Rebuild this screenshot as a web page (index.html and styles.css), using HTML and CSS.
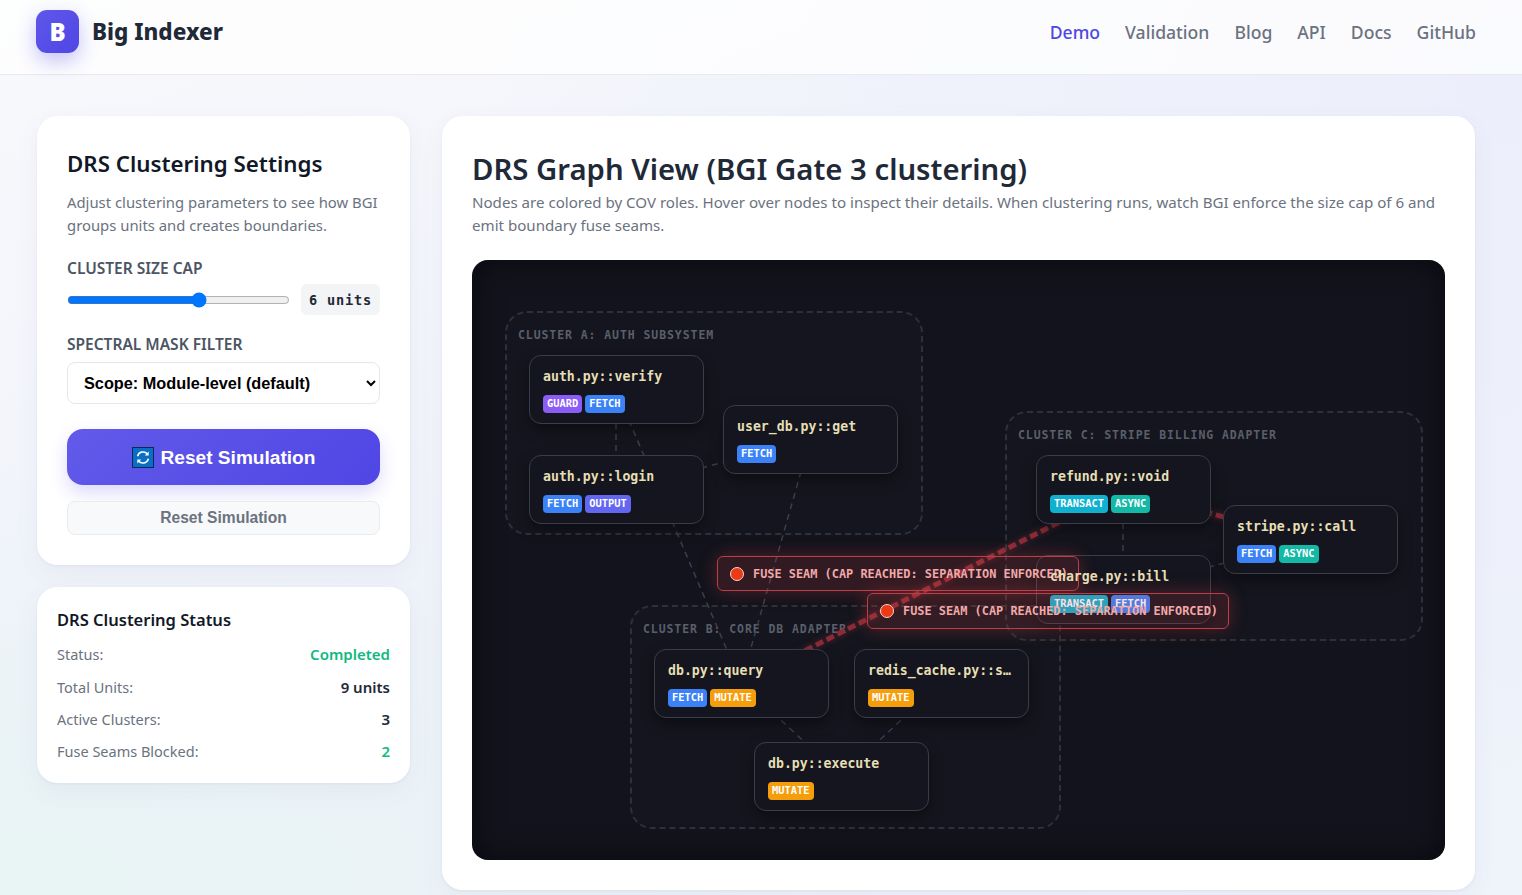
FILE: index.html
```html
<!DOCTYPE html>
<html lang="en">
<head>
<meta charset="utf-8">
<title>Big Indexer - DRS Demo</title>
<link rel="stylesheet" href="styles.css">
</head>
<body>
<header class="topbar">
  <div class="brand">
    <div class="brand_logo">B</div>
    <span class="brand_name">Big Indexer</span>
  </div>
  <nav class="nav">
    <a class="nav_active" href="#">Demo</a>
    <a href="#">Validation</a>
    <a href="#">Blog</a>
    <a href="#">API</a>
    <a href="#">Docs</a>
    <a href="#">GitHub</a>
  </nav>
</header>

<main class="layout">
  <aside class="sidebar">
    <section class="card settings">
      <h2>DRS Clustering Settings</h2>
      <p class="muted">Adjust clustering parameters to see how BGI groups units and creates boundaries.</p>
      <label class="field_label">CLUSTER SIZE CAP</label>
      <div class="slider_row">
        <input class="slider" type="range" min="3" max="8" value="6">
        <span class="slider_value">6 units</span>
      </div>
      <label class="field_label">SPECTRAL MASK FILTER</label>
      <select class="select">
        <option>Scope: Module-level (default)</option>
      </select>
      <button class="btn_primary" type="button">
        <svg class="btn_icon" viewBox="0 0 22 21">
          <rect x="0.5" y="0.5" width="21" height="20" fill="#0a6fc4" stroke="#0b2a52"/>
          <path d="M5.6 9.2A5.6 5.6 0 0 1 15.4 7" fill="none" stroke="#fff" stroke-width="1.5"/>
          <path d="M16.7 4.6v3.9h-3.9z" fill="#fff"/>
          <path d="M16.4 11.8A5.6 5.6 0 0 1 6.6 14" fill="none" stroke="#fff" stroke-width="1.5"/>
          <path d="M5.3 16.4v-3.9h3.9z" fill="#fff"/>
        </svg>
        Reset Simulation
      </button>
      <button class="btn_secondary" type="button">Reset Simulation</button>
    </section>

    <section class="card status">
      <h3>DRS Clustering Status</h3>
      <div class="status_row"><span>Status:</span><b class="good">Completed</b></div>
      <div class="status_row"><span>Total Units:</span><b>9 units</b></div>
      <div class="status_row"><span>Active Clusters:</span><b>3</b></div>
      <div class="status_row"><span>Fuse Seams Blocked:</span><b class="good">2</b></div>
    </section>
  </aside>

  <section class="card graph_card">
    <h1>DRS Graph View (BGI Gate 3 clustering)</h1>
    <p class="muted">Nodes are colored by COV roles. Hover over nodes to inspect their details. When clustering runs, watch BGI enforce the size cap of 6 and emit boundary fuse seams.</p>

    <div class="graph">
      <div class="cluster cluster_a"><span>CLUSTER A: AUTH SUBSYSTEM</span></div>
      <div class="cluster cluster_b"><span>CLUSTER B: CORE DB ADAPTER</span></div>
      <div class="cluster cluster_c"><span>CLUSTER C: STRIPE BILLING ADAPTER</span></div>

      <svg class="edges" width="973" height="600" viewBox="0 0 973 600">
        <line x1="144" y1="130" x2="144" y2="230"/>
        <line x1="144" y1="130" x2="269" y2="423"/>
        <line x1="144" y1="230" x2="338" y2="180"/>
        <line x1="338" y1="180" x2="269" y2="423"/>
        <line x1="269" y1="423" x2="369" y2="516"/>
        <line x1="469" y1="423" x2="369" y2="516"/>
        <line x1="651" y1="230" x2="651" y2="330"/>
        <line x1="651" y1="330" x2="838" y2="280"/>
        <line class="edge_cut" x1="651" y1="230" x2="838" y2="280"/>
        <line class="edge_cut" x1="651" y1="230" x2="269" y2="423"/>
      </svg>

      <div class="node node_verify">
        <div class="node_name">auth.py::verify</div>
        <div class="tags"><span class="tag guard">GUARD</span><span class="tag fetch">FETCH</span></div>
      </div>
      <div class="node node_login">
        <div class="node_name">auth.py::login</div>
        <div class="tags"><span class="tag fetch">FETCH</span><span class="tag output">OUTPUT</span></div>
      </div>
      <div class="node node_userdb">
        <div class="node_name">user_db.py::get</div>
        <div class="tags"><span class="tag fetch">FETCH</span></div>
      </div>
      <div class="node node_query">
        <div class="node_name">db.py::query</div>
        <div class="tags"><span class="tag fetch">FETCH</span><span class="tag mutate">MUTATE</span></div>
      </div>
      <div class="node node_redis">
        <div class="node_name">redis_cache.py::set</div>
        <div class="tags"><span class="tag mutate">MUTATE</span></div>
      </div>
      <div class="node node_execute">
        <div class="node_name">db.py::execute</div>
        <div class="tags"><span class="tag mutate">MUTATE</span></div>
      </div>
      <div class="node node_refund">
        <div class="node_name">refund.py::void</div>
        <div class="tags"><span class="tag transact">TRANSACT</span><span class="tag async">ASYNC</span></div>
      </div>
      <div class="node node_charge">
        <div class="node_name">charge.py::bill</div>
        <div class="tags"><span class="tag transact">TRANSACT</span><span class="tag fetch">FETCH</span></div>
      </div>
      <div class="node node_stripe">
        <div class="node_name">stripe.py::call</div>
        <div class="tags"><span class="tag fetch">FETCH</span><span class="tag async">ASYNC</span></div>
      </div>

      <div class="fuse fuse_one"><i></i>FUSE SEAM (CAP REACHED: SEPARATION ENFORCED)</div>
      <div class="fuse fuse_two"><i></i>FUSE SEAM (CAP REACHED: SEPARATION ENFORCED)</div>
    </div>
  </section>
</main>
</body>
</html>
```

FILE: styles.css
```css
* {
	box-sizing: border-box;
}
html, body {
	height: 100%;
}
body {
	margin: 0;
	overflow: hidden;
	font-family: "Noto Sans", "Open Sans", sans-serif;
	color: #1f2937;
	background:
		radial-gradient(ellipse 60% 50% at 0% 100%, #e8f4f4 0%, rgba(232, 244, 244, 0) 100%),
		radial-gradient(ellipse 70% 80% at 100% 10%, #eceefb 0%, rgba(236, 238, 251, 0) 100%),
		linear-gradient(160deg, #f8f9fc 0%, #eef1fa 60%, #eff3fa 100%);
}

/* top bar */
.topbar {
	height: 75px;
	display: flex;
	align-items: center;
	justify-content: space-between;
	padding: 0 46px 0 36px;
	background: rgba(255, 255, 255, 0.75);
	border-bottom: 1px solid #e8eaf0;
}
.brand {
	display: flex;
	align-items: center;
	gap: 13px;
	margin-top: -11px;
}
.brand_logo {
	width: 43px;
	height: 43px;
	border-radius: 11px;
	display: flex;
	align-items: center;
	justify-content: center;
	background: linear-gradient(135deg, #5f57ea, #4f46e5);
	box-shadow: 0 8px 20px rgba(79, 70, 229, 0.32);
	color: #fff;
	font-size: 24px;
	font-weight: 900;
}
.brand_name {
	font-size: 22.5px;
	font-weight: 800;
	color: #1f2937;
}
.nav {
	display: flex;
	gap: 25px;
	margin-top: -11px;
}
.nav a {
	font-size: 17.6px;
	font-weight: 500;
	color: #6b7280;
	text-decoration: none;
}
.nav a.nav_active {
	color: #4f46e5;
}

/* page columns */
.layout {
	display: grid;
	grid-template-columns: 373px 1033px;
	gap: 32px;
	padding: 41px 0 0 37px;
}
.sidebar {
	display: flex;
	flex-direction: column;
	gap: 22px;
}
.card {
	background: #fff;
	border-radius: 20px;
	border: 1px solid #fff;
	box-shadow: 0 1px 3px rgba(100, 110, 160, 0.08), 0 8px 24px rgba(100, 110, 160, 0.06);
}
.muted {
	margin: 0;
	font-size: 15.1px;
	line-height: 23px;
	color: #6b7280;
}

/* settings card */
.settings {
	height: 449px;
	padding: 32px 29px 0 29px;
}
.settings h2 {
	margin: 0 0 12px 0;
	font-size: 22.3px;
	line-height: 30px;
	font-weight: 600;
	color: #111827;
}
.settings .muted {
	font-size: 14.85px;
}
.field_label {
	display: block;
	font-size: 15.5px;
	line-height: 20px;
	font-weight: 600;
	color: #4b5563;
}
.settings .muted + .field_label {
	margin-top: 21px;
}
.slider_row {
	display: flex;
	align-items: center;
	justify-content: space-between;
	margin: 6px 0 19px 0;
}
.slider {
	width: 223px;
	margin: 0;
}
.slider_value {
	width: 79px;
	height: 31px;
	display: flex;
	align-items: center;
	justify-content: center;
	border-radius: 6px;
	background: #f3f4f6;
	font-family: "DejaVu Sans Mono", monospace;
	font-size: 13.6px;
	font-weight: 700;
	letter-spacing: 0.8px;
	color: #1f2937;
}
.select {
	display: block;
	width: 313px;
	height: 42px;
	margin: 8px 0 25px 0;
	padding: 0 12px;
	border: 1px solid #e5e7eb;
	border-radius: 8px;
	background-color: #fff;
	font-family: "Liberation Sans", sans-serif;
	font-size: 16.3px;
	font-weight: 700;
	color: #000;
}
.btn_primary, .btn_secondary {
	display: flex;
	align-items: center;
	justify-content: center;
	width: 313px;
	font-family: "Liberation Sans", sans-serif;
	font-weight: 700;
	cursor: pointer;
}
.btn_primary {
	height: 56px;
	gap: 7px;
	padding-top: 2px;
	border: 0;
	border-radius: 16px;
	background: linear-gradient(135deg, #625ae9, #4f46e5);
	box-shadow: 0 8px 18px rgba(79, 70, 229, 0.2);
	font-size: 19.1px;
	color: #fff;
}
.btn_icon {
	width: 22px;
	height: 21px;
}
.btn_secondary {
	height: 34px;
	margin-top: 16px;
	border: 1px solid #e9ebef;
	border-radius: 8px;
	background: #f8f9fb;
	font-size: 15.6px;
	color: #6b7280;
}

/* status card */
.status {
	height: 196px;
	padding: 18px 19px 0 19px;
}
.status h3 {
	margin: 0 0 4px 0;
	font-size: 16.5px;
	line-height: 28px;
	font-weight: 600;
	color: #111827;
}
.status_row {
	display: flex;
	justify-content: space-between;
	height: 32.4px;
	align-items: center;
	font-size: 14.5px;
	color: #6b7280;
}
.status_row b {
	font-size: 15px;
	font-weight: 600;
	color: #1f2937;
}
.status_row b.good {
	color: #10b981;
}

/* graph card */
.graph_card {
	height: 774px;
	padding: 32px 29px 0 29px;
}
.graph_card h1 {
	margin: 0 0 2px 0;
	font-size: 29.3px;
	line-height: 40px;
	font-weight: 600;
	color: #1f2937;
}
.graph {
	position: relative;
	width: 973px;
	height: 600px;
	margin-top: 23px;
	border-radius: 16px;
	overflow: hidden;
	background: #12131c;
	box-shadow: inset 0 0 30px rgba(0, 0, 0, 0.5);
}
.edges {
	position: absolute;
	left: 0;
	top: 0;
}
.edges line {
	stroke: #3b3f4b;
	stroke-width: 1.5;
	stroke-dasharray: 6 5;
}
.edges line.edge_cut {
	stroke: #8a2c38;
	stroke-width: 5;
	stroke-dasharray: 8 4;
	filter: drop-shadow(0 0 3px rgba(239, 68, 68, 0.35));
}

/* clusters, placed on the diagram canvas */
.cluster {
	position: absolute;
	padding: 15px 11px;
	border: 2px dashed #2e3139;
	border-radius: 22px;
	background: rgba(255, 255, 255, 0.012);
}
.cluster span {
	display: block;
	font-family: "DejaVu Sans Mono", monospace;
	font-size: 11.5px;
	line-height: 14px;
	font-weight: 700;
	letter-spacing: 0.92px;
	color: #5a5f6b;
}
.cluster_a { left: 33px; top: 51px; width: 418px; height: 224px; }
.cluster_b { left: 158px; top: 345px; width: 431px; height: 224px; }
.cluster_c { left: 533px; top: 151px; width: 418px; height: 230px; }

/* nodes */
.node {
	position: absolute;
	width: 175px;
	height: 69px;
	padding: 13px 13px 0 13px;
	border: 1px solid #3a3d49;
	border-radius: 12px;
	background: #14151f;
	box-shadow: 0 6px 14px rgba(0, 0, 0, 0.35);
}
.node_name {
	position: relative;
	z-index: 3;
	font-family: "DejaVu Sans Mono", monospace;
	font-size: 13.2px;
	line-height: 16px;
	font-weight: 700;
	color: #e6dfb4;
	white-space: nowrap;
	overflow: hidden;
	text-overflow: ellipsis;
}
.tags {
	display: flex;
	gap: 3px;
	margin-top: 10px;
}
.tag {
	height: 18px;
	padding: 0 4px;
	border-radius: 4px;
	font-family: "DejaVu Sans Mono", monospace;
	font-size: 10.4px;
	line-height: 17px;
	font-weight: 700;
	color: #fff;
}
.guard { background: #8b5cf6; }
.fetch { background: #3b82f6; }
.output { background: #6366f1; }
.transact { background: #0fb0d0; }
.async { background: #14b8a6; }
.mutate { background: #f59e0b; }

.node_verify { left: 57px; top: 95px; }
.node_login { left: 57px; top: 195px; }
.node_userdb { left: 251px; top: 145px; }
.node_query { left: 182px; top: 389px; }
.node_redis { left: 382px; top: 389px; }
.node_execute { left: 282px; top: 482px; }
.node_refund { left: 564px; top: 195px; }
.node_charge { left: 564px; top: 295px; }
.node_stripe { left: 751px; top: 245px; }

/* fuse seam labels */
.fuse {
	position: absolute;
	width: 362px;
	display: flex;
	align-items: center;
	gap: 9px;
	padding-left: 12px;
	border: 1.5px solid #bb3e4a;
	border-radius: 6px;
	background: rgba(239, 68, 68, 0.14);
	box-shadow: 0 0 18px rgba(239, 68, 68, 0.3);
	font-family: "DejaVu Sans Mono", monospace;
	font-size: 11.9px;
	font-weight: 700;
	white-space: nowrap;
	color: #f2a9a9;
}
.fuse i {
	width: 14px;
	height: 14px;
	flex: none;
	border-radius: 50%;
	border: 1px solid #f6d5cc;
	background: #ea3a16;
}
.fuse_one { left: 245px; top: 296px; height: 35px; z-index: 2; }
.fuse_two { left: 395px; top: 333px; height: 36px; z-index: 4; }
```
